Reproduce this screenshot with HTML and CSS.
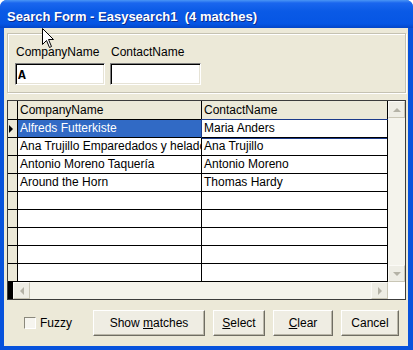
FILE: index.html
```html
<!DOCTYPE html>
<html lang="en">
<head>
  <meta charset="UTF-8">
  <title>Search Form - Easysearch1</title>
  <link rel="stylesheet" href="styles.css">
</head>
<body>

  <div class="window">
    <div class="titlebar">Search Form - Easysearch1  (4 matches)</div>

    <div class="client">
      <!-- Filter fields -->
      <div class="filters">
        <div class="field field-company">
          <label for="companyName">CompanyName</label>
          <input id="companyName" type="text" value="A">
        </div>
        <div class="field field-contact">
          <label for="contactName">ContactName</label>
          <input id="contactName" type="text">
        </div>
      </div>

      <!-- Results grid -->
      <div class="grid">
        <div class="grid-body">
          <div class="rows">
            <div class="row header">
              <div class="ind"></div>
              <div class="cell">CompanyName</div>
              <div class="cell">ContactName</div>
            </div>
            <div class="row current">
              <div class="ind"><span class="pointer"></span></div>
              <div class="cell selected">Alfreds Futterkiste</div>
              <div class="cell focused">Maria Anders</div>
            </div>
            <div class="row">
              <div class="ind"></div>
              <div class="cell">Ana Trujillo Emparedados y helados</div>
              <div class="cell">Ana Trujillo</div>
            </div>
            <div class="row">
              <div class="ind"></div>
              <div class="cell">Antonio Moreno Taquería</div>
              <div class="cell">Antonio Moreno</div>
            </div>
            <div class="row">
              <div class="ind"></div>
              <div class="cell">Around the Horn</div>
              <div class="cell">Thomas Hardy</div>
            </div>
            <div class="row"><div class="ind"></div><div class="cell"></div><div class="cell"></div></div>
            <div class="row"><div class="ind"></div><div class="cell"></div><div class="cell"></div></div>
            <div class="row"><div class="ind"></div><div class="cell"></div><div class="cell"></div></div>
            <div class="row"><div class="ind"></div><div class="cell"></div><div class="cell"></div></div>
            <div class="row"><div class="ind"></div><div class="cell"></div><div class="cell"></div></div>
          </div>
          <div class="vscroll">
            <div class="sbtn"><span class="arrow arrow-up"></span></div>
            <div class="track"></div>
            <div class="sbtn"><span class="arrow arrow-down"></span></div>
          </div>
        </div>
        <div class="hscroll">
          <div class="hblock"></div>
          <div class="sbtn"><span class="arrow arrow-left"></span></div>
          <div class="track"></div>
          <div class="sbtn"><span class="arrow arrow-right"></span></div>
          <div class="corner"></div>
        </div>
      </div>

      <!-- Bottom buttons -->
      <div class="actions">
        <label class="fuzzy"><span class="check"></span>Fuzzy</label>
        <div class="buttons">
          <button class="btn btn-show">Show <u>m</u>atches</button>
          <button class="btn btn-select"><u>S</u>elect</button>
          <button class="btn btn-clear"><u>C</u>lear</button>
          <button class="btn btn-cancel">Cancel</button>
        </div>
      </div>
    </div>

    <!-- Mouse pointer over the form -->
    <svg class="cursor" width="13" height="21" viewBox="0 0 13 21">
      <path d="M0.5 0.5 L0.5 16.5 L4.5 12.5 L7.5 19.5 L9.5 18.5 L6.5 11.5 L11.5 11.5 Z" fill="#fff" stroke="#000" stroke-width="1"/>
    </svg>
  </div>

</body>
</html>
```

FILE: styles.css
```css
html, body {
  margin: 0;
  background: #fff;
}

body {
  font-family: "Liberation Sans", Arial, sans-serif;
  font-size: 12px;
  color: #000;
}

.window {
  position: relative;
  width: 413px;
  height: 350px;
  box-sizing: border-box;
  padding: 0 5px 4px 4px;
  background: #0752dc;
  border-radius: 7px 7px 0 0;
  display: flex;
  flex-direction: column;
  overflow: hidden;
}

.titlebar {
  height: 28px;
  flex: none;
  box-sizing: border-box;
  margin: 0 -5px 0 -4px;
  padding: 4px 0 0 7px;
  line-height: 25px;
  font-size: 13px;
  font-weight: bold;
  color: #fff;
  white-space: pre;
  text-shadow: 1px 1px 0 #0a2a8c;
  background: linear-gradient(#4a95f5 0, #1a66ee 3px, #0a5ae6 40%, #0656e4 85%, #0446c8 100%);
}

.client {
  flex: 1;
  background: #ece9d8;
  display: flex;
  flex-direction: column;
}

/* Filter group */
.filters {
  height: 60px;
  box-sizing: border-box;
  margin: 5px 2px 0 3px;
  padding: 11px 0 0 7px;
  border: 1px solid #c5c2b2;
  box-shadow: inset 1px 1px 0 #fff, 1px 1px 0 #fff;
  display: flex;
  gap: 5px;
}

.field label {
  display: block;
  padding-left: 1px;
  line-height: 14px;
  margin-bottom: 4px;
}

.field input {
  display: block;
  width: 90px;
  height: 22px;
  box-sizing: border-box;
  margin: 0;
  padding: 2px 0 0 2px;
  border: 1px solid;
  border-color: #7f7f7f #fff #fff #7f7f7f;
  box-shadow: inset 1px 1px 0 #000, inset -1px -1px 0 #e6e3d6;
  background: #fff;
  font-family: "Liberation Mono", "Courier New", monospace;
  font-size: 13px;
  font-weight: bold;
  color: #000;
  outline: none;
}

.field-contact input {
  width: 91px;
}

/* Grid */
.grid {
  height: 200px;
  box-sizing: border-box;
  margin: 7px 2px 0 3px;
  border: 1px solid #3c3c3c;
  display: flex;
  flex-direction: column;
}

.grid-body {
  height: 181px;
  display: flex;
}

.rows {
  width: 380px;
  background: #fff;
}

.row {
  display: grid;
  grid-template-columns: 10px 184px 186px;
  height: 18px;
}

.row.header {
  height: 19px;
}

.row > div {
  box-sizing: border-box;
  border-right: 1px solid #000;
  border-bottom: 1px solid #000;
}

.ind {
  background: #ece9d8;
  position: relative;
}

.cell {
  padding-left: 2px;
  line-height: 17px;
  white-space: nowrap;
  overflow: hidden;
}

.header .cell {
  background: #ece9d8;
  line-height: 18px;
}

.cell.selected {
  background: #316ac5;
  color: #fff;
}

.cell.focused {
  outline: 1px solid #1c3a8a;
}

.pointer {
  position: absolute;
  left: 1px;
  top: 5px;
  border-left: 4px solid #000;
  border-top: 4px solid transparent;
  border-bottom: 4px solid transparent;
}

/* Scrollbars */
.vscroll {
  width: 17px;
  display: flex;
  flex-direction: column;
  background: #f4f3ec;
}

.vscroll .track {
  flex: 1;
}

.hscroll {
  height: 17px;
  display: flex;
  background: #f4f3ec;
}

.hscroll .track {
  flex: 1;
}

.hblock {
  width: 5px;
  background: #000;
}

.corner {
  width: 17px;
  background: #fff;
}

.sbtn {
  width: 17px;
  height: 17px;
  box-sizing: border-box;
  border: 1px solid;
  border-color: #fbfaf6 #c9c6b6 #c9c6b6 #fbfaf6;
  background: #eeede5;
  display: flex;
  align-items: center;
  justify-content: center;
}

.arrow {
  width: 0;
  height: 0;
}

.arrow-up {
  border-left: 4px solid transparent;
  border-right: 4px solid transparent;
  border-bottom: 4px solid #b4b2a6;
}

.arrow-down {
  border-left: 4px solid transparent;
  border-right: 4px solid transparent;
  border-top: 4px solid #b4b2a6;
}

.arrow-left {
  border-top: 4px solid transparent;
  border-bottom: 4px solid transparent;
  border-right: 4px solid #b4b2a6;
}

.arrow-right {
  border-top: 4px solid transparent;
  border-bottom: 4px solid transparent;
  border-left: 4px solid #b4b2a6;
}

/* Bottom row */
.actions {
  display: flex;
  align-items: center;
  padding: 10px 9px 0 20px;
}

.fuzzy {
  display: flex;
  align-items: center;
  gap: 4px;
}

.check {
  width: 12px;
  height: 12px;
  box-sizing: border-box;
  border: 1px solid;
  border-color: #8a887c #fff #fff #8a887c;
  background: #f6f5ef;
}

.buttons {
  margin-left: auto;
  display: flex;
  gap: 8px;
}

.btn {
  height: 26px;
  box-sizing: border-box;
  margin: 0;
  padding: 0;
  border: 1px solid;
  border-color: #fff #6f6d63 #6f6d63 #fff;
  box-shadow: inset -1px -1px 0 #b9b6a8;
  background: #efede3;
  font-family: "Liberation Sans", Arial, sans-serif;
  font-size: 12px;
  color: #000;
}

.btn-show { width: 112px; }
.btn-select { width: 52px; }
.btn-clear { width: 60px; }
.btn-cancel { width: 58px; }

.cursor {
  position: absolute;
  left: 42px;
  top: 28px;
}
```
